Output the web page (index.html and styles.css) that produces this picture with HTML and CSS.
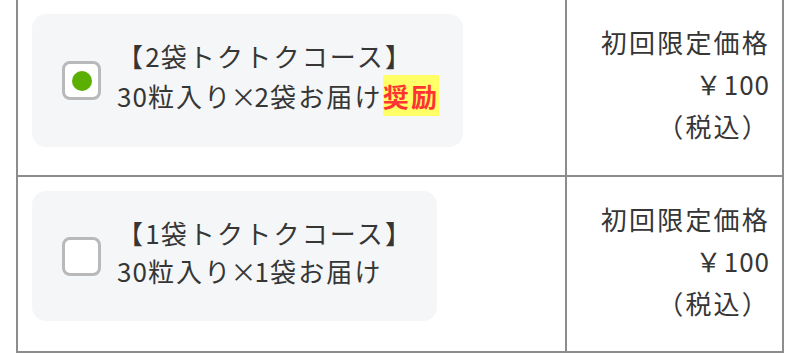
FILE: index.html
```html
<!DOCTYPE html>
<html>
    <head>
        <meta charset="UTF-8" />
        <link rel="stylesheet" href="styles.css">
    </head>
    <body>
        <div class="plans">
            <div class="cell course">
                <label class="card">
                    <span class="box checked"><span class="dot"></span></span>
                    <span class="name">
                        【<span class="num">2</span>袋トクトクコース】<br>
                        <span class="num">30</span>粒入り<span class="times">×</span><span class="num">2</span>袋お届け<span class="award">奨励</span>
                    </span>
                </label>
            </div>
            <div class="cell price">
                初回限定価格<br>
                ￥<span class="num">100</span><br>
                （税込）
            </div>

            <div class="cell course">
                <label class="card">
                    <span class="box"></span>
                    <span class="name">
                        【<span class="num">1</span>袋トクトクコース】<br>
                        <span class="num">30</span>粒入り<span class="times">×</span><span class="num">1</span>袋お届け
                    </span>
                </label>
            </div>
            <div class="cell price">
                初回限定価格<br>
                ￥<span class="num">100</span><br>
                （税込）
            </div>
        </div>
    </body>
</html>
```

FILE: styles.css
```css
body {
    margin: 0;
    background-color: white;
    color: #363636;
    font-family: "Noto Sans CJK JP", "Noto Sans", sans-serif;
    font-size: 26px;
    letter-spacing: 2.2px;
}

.num {
    letter-spacing: 1px;
}

.times {
    margin-left: -2px;
    letter-spacing: -2px;
}

.plans {
    display: grid;
    grid-template-columns: 549px 217px;
    grid-auto-rows: minmax(176px, auto);
    width: 768px;
    margin-left: 16px;
    margin-top: -2px;
    border-left: 2px solid #8c8c8c;
    border-top: 2px solid #8c8c8c;
}

.cell {
    box-sizing: border-box;
    border-right: 2px solid #8c8c8c;
    border-bottom: 2px solid #8c8c8c;
}

.course {
    padding: 14px 14px 28px 14px;
}

.card {
    display: inline-flex;
    align-items: center;
    gap: 16px;
    padding: 23px 24px 23px 30px;
    border-radius: 14px;
    background-color: #f5f6f7;
}

.box {
    box-sizing: border-box;
    width: 39px;
    height: 39px;
    border: 3px solid #b9b9b9;
    border-radius: 8px;
    background-color: white;
    display: flex;
    align-items: center;
    justify-content: center;
    flex-shrink: 0;
}

.dot {
    width: 20px;
    height: 20px;
    border-radius: 50%;
    background-color: #5aaf00;
}

.name {
    line-height: 38px;
    margin-bottom: 8px;
    white-space: nowrap;
}

.award {
    display: inline-block;
    line-height: 41px;
    color: #f33;
    font-weight: bold;
    background-color: #ffff66;
}

.price {
    text-align: right;
    line-height: 42px;
    padding: 21px 12px 0 0;
}
```
